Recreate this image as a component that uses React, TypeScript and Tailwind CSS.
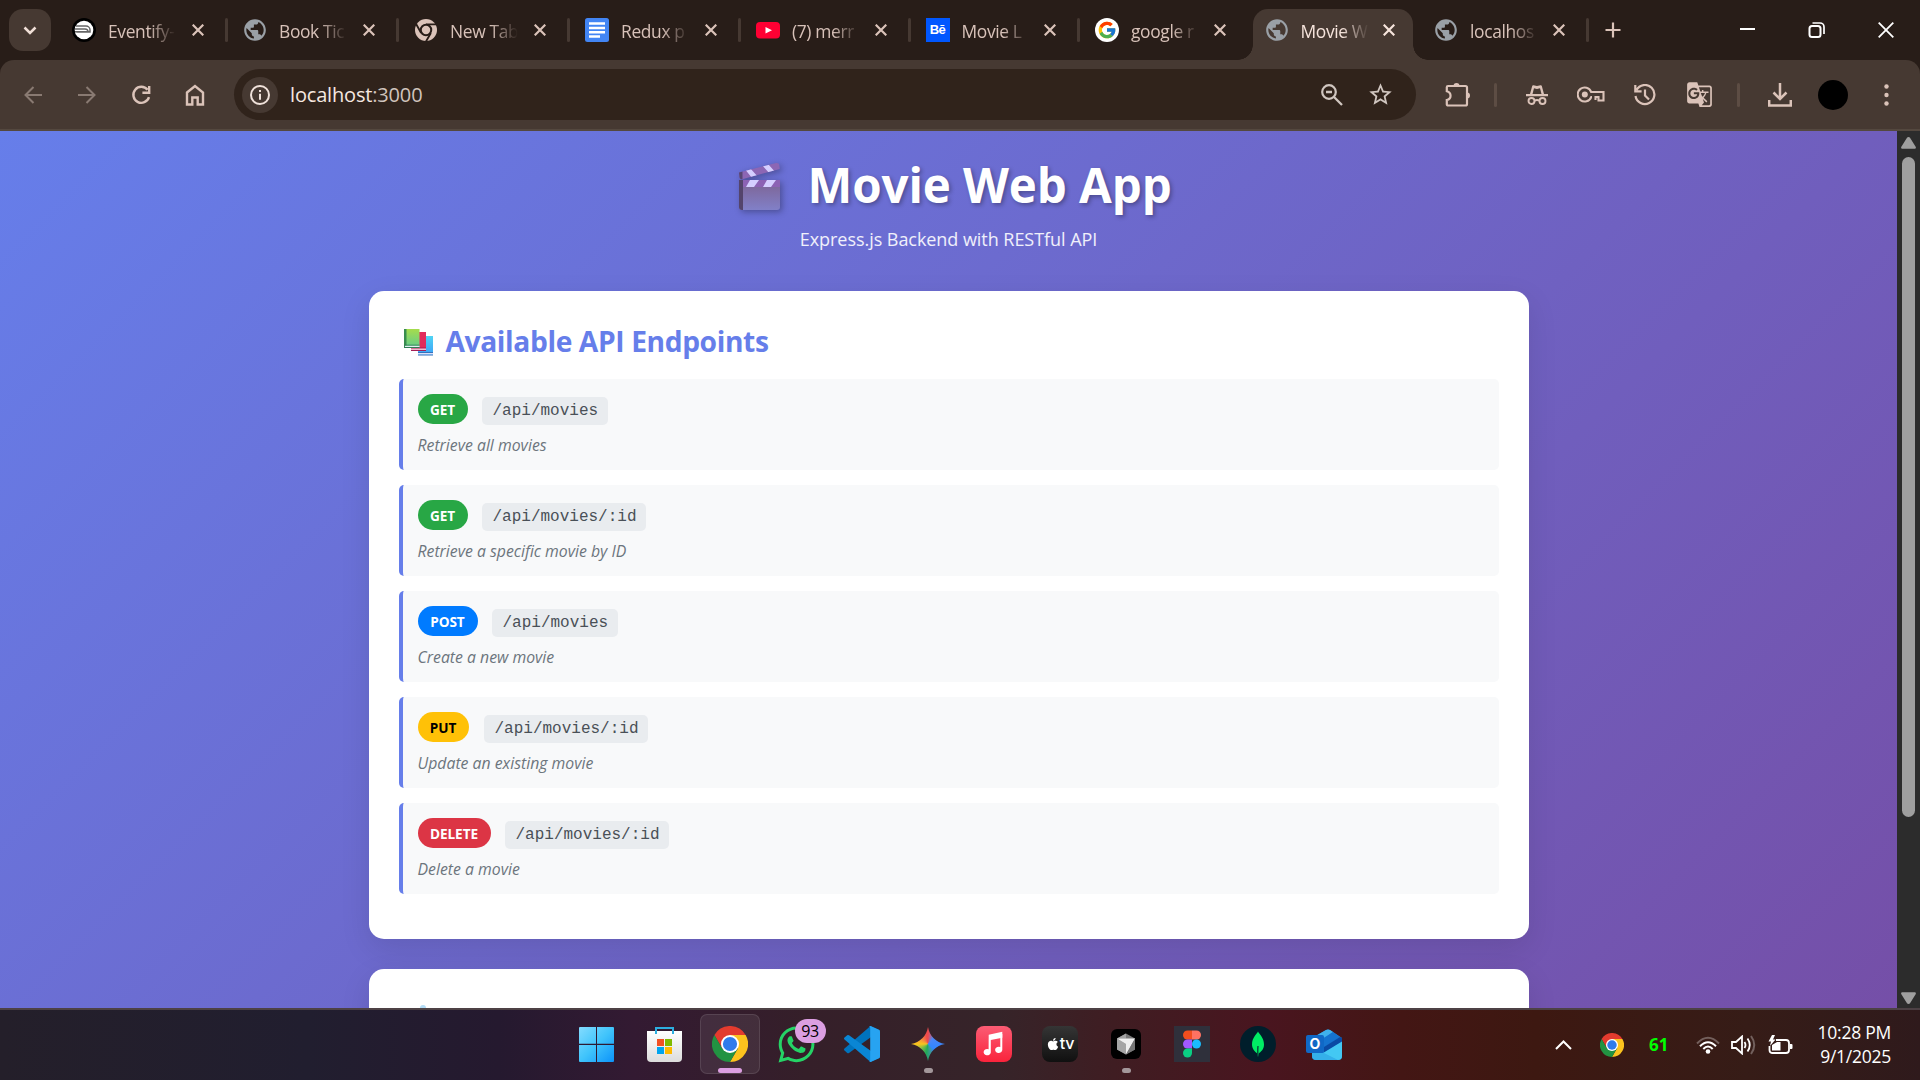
import React from "react";
import { FaApple, FaWhatsapp } from "react-icons/fa";
import { FcGoogle } from "react-icons/fc";
import { MdGTranslate, MdHistory, MdPublic, MdStarBorder } from "react-icons/md";

const stroke = {
  fill: "none",
  stroke: "currentColor",
  strokeWidth: 2,
} as const;

function ChromeLogo({ size }: { size: number }) {
  return (
    <svg width={size} height={size} viewBox="0 0 36 36">
      <path d="M18 9 H33.6 A18 18 0 0 0 2.4 9 L10.2 22.5 Z" fill="#e33b2e" />
      <path d="M25.8 22.5 L18 36 A18 18 0 0 0 33.6 9 H18 Z" fill="#fcc31e" />
      <path d="M10.2 22.5 L2.4 9 A18 18 0 0 0 18 36 L25.8 22.5 Z" fill="#229342" />
      <circle cx="18" cy="18" r="9" fill="#fff" />
      <circle cx="18" cy="18" r="7.1" fill="#2f7bea" />
    </svg>
  );
}

function MonoChrome() {
  return (
    <svg width="22" height="22" viewBox="0 0 24 24" fill="none">
      <circle cx="12" cy="12" r="12" fill="#dbc3b9" />
      <path d="M12 5.800H24M6.700 15.200L1.200 5.500M17.300 15.200L12 24.500" stroke="#281d18" strokeWidth="2" />
      <circle cx="12" cy="12" r="5.700" fill="#dbc3b9" stroke="#281d18" strokeWidth="2.200" />
    </svg>
  );
}

const Globe = () => <MdPublic size={26} color="#9aa0a6" className="-m-px shrink-0" />;

function EventifyIcon() {
  return (
    <svg width="24" height="24" viewBox="0 0 24 24">
      <circle cx="12" cy="12" r="12" fill="#000" />
      <circle cx="12" cy="12" r="9.3" fill="#fff" />
      <path d="M4 8h10a4 4 0 0 1 4 4v2H4.500M3 11h10a3 3 0 0 1 3 3M3 13.700h15" fill="none" stroke="#666" strokeWidth="1.500" />
    </svg>
  );
}

function DocsIcon() {
  return (
    <svg width="24" height="24" viewBox="0 0 24 24">
      <rect width="24" height="24" rx="2.500" fill="#4285f4" />
      <path d="M4 5.500h16M4 10h16M4 14.300h16M4 18.500h11" stroke="#fff" strokeWidth="2.400" />
    </svg>
  );
}

function YouTubeIcon() {
  return (
    <svg width="24" height="24" viewBox="0 0 24 24">
      <rect y="4" width="24" height="16.500" rx="4" fill="#ff0033" />
      <path d="M9.500 9l6.500 3.300-6.500 3.300z" fill="#fff" />
    </svg>
  );
}

const BehanceIcon = () => (
  <span className="flex h-6 w-6 items-center justify-center bg-[#0057ff] font-['Liberation_Sans'] text-[13px] font-bold tracking-[-0.5px] text-white">
    Bē
  </span>
);

const GoogleIcon = () => (
  <span className="flex h-6 w-6 items-center justify-center rounded-full bg-white">
    <FcGoogle size={20} />
  </span>
);

function Cross({ size = 12, width = 2.2 }: { size?: number; width?: number }) {
  return (
    <svg width={size} height={size} viewBox={`0 0 ${size} ${size}`} className="shrink-0">
      <path d={`M.7.7L${size - 0.7} ${size - 0.7}M${size - 0.7} .7L.7 ${size - 0.7}`} {...stroke} strokeWidth={width} />
    </svg>
  );
}

type TabInfo = { title: string; icon: React.ReactNode; active?: boolean; sep?: boolean; wide?: boolean };

const tabs: TabInfo[] = [
  { title: "Eventify-", icon: <EventifyIcon />, sep: true, wide: true },
  { title: "Book Tic", icon: <Globe />, sep: true, wide: true },
  { title: "New Tab", icon: <MonoChrome />, sep: true, wide: true },
  { title: "Redux p", icon: <DocsIcon />, sep: true, wide: true },
  { title: "(7) merr", icon: <YouTubeIcon />, sep: true },
  { title: "Movie L", icon: <BehanceIcon />, sep: true },
  { title: "google r", icon: <GoogleIcon /> },
  { title: "Movie W", icon: <Globe />, active: true },
  { title: "localhos", icon: <Globe />, sep: true },
];

function Tab({ tab }: { tab: TabInfo }) {
  return (
    <div className={`relative flex h-[60px] shrink-0 items-center ${tab.wide ? "w-[171px]" : "w-[169.5px]"}`}>
      {tab.active && (
        <>
          <div className="absolute top-[9px] bottom-0 left-[3.5px] w-[160px] rounded-t-[15px] bg-[#463932]" />
          <div className="absolute bottom-0 left-[-11.500px] h-[15px] w-[15px] bg-[radial-gradient(circle_at_0_0,transparent_14.5px,#463932_15px)]" />
          <div className="absolute bottom-0 left-[163.5px] h-[15px] w-[15px] bg-[radial-gradient(circle_at_100%_0,transparent_14.5px,#463932_15px)]" />
        </>
      )}
      <div className="relative ml-[15px] flex h-6 w-6 shrink-0 items-center justify-center">{tab.icon}</div>
      <div
        className={`relative mt-[2px] ml-3 w-[70px] shrink-0 text-[17.4px] leading-6 tracking-[-0.35px] whitespace-nowrap [mask-image:linear-gradient(90deg,#000_58%,transparent_97%)] ${tab.active ? "text-[#f6e4dc]" : "text-[#d8c2b9]"}`}
      >
        {tab.title}
      </div>
      <div className={`relative flex ${tab.wide ? "ml-[14px]" : "ml-[12.500px]"} ${tab.active ? "text-[#f6e4dc]" : "text-[#dbc3b9]"}`}>
        <Cross />
      </div>
      {tab.sep && <div className="ml-auto h-6 w-[3px] rounded bg-[#463932]" />}
    </div>
  );
}

function TabStrip() {
  return (
    <div className="flex h-[60px] shrink-0 bg-[#281d18]">
      <div className="mt-[9px] ml-[9px] flex h-[42px] w-[42px] shrink-0 items-center justify-center rounded-[14px] bg-[#463932] text-[#f0dfd7]">
        <svg width="14" height="9" viewBox="0 0 14 9">
          <path d="M1.500 1.500L7 7l5.500-5.500" {...stroke} strokeWidth={2.5} />
        </svg>
      </div>
      <div className="ml-[6px] flex">
        {tabs.map((t) => (
          <Tab key={t.title} tab={t} />
        ))}
      </div>
      <div className="flex w-[49px] items-center justify-center text-[#dbc3b9]">
        <svg width="16" height="16" viewBox="0 0 16 16">
          <path d="M8 .5v15M.5 8h15" {...stroke} strokeWidth={2.2} />
        </svg>
      </div>
      <div className="ml-auto flex items-center text-white">
        <div className="flex w-[69px] justify-center">
          <div className="mt-[-2px] h-[2px] w-[15px] bg-white" />
        </div>
        <div className="flex w-[69px] justify-center">
          <svg width="17" height="16" viewBox="0 0 17 16">
            <rect x="1.500" y="4" width="11" height="11" rx="2.500" {...stroke} />
            <path d="M4.500 1h7.500a4 4 0 0 1 4 4v7" {...stroke} strokeWidth={1.7} />
          </svg>
        </div>
        <div className="flex w-[69px] justify-center">
          <Cross size={16} width={1.8} />
        </div>
      </div>
    </div>
  );
}

const Slot = ({ children, dim }: { children: React.ReactNode; dim?: boolean }) => (
  <div className={`flex w-[54px] shrink-0 items-center justify-center ${dim ? "text-[#897a72]" : "text-[#dbc3b9]"}`}>{children}</div>
);

function Toolbar() {
  return (
    <div className="h-[71px] shrink-0 bg-[#281d18]">
      <div className="flex h-full items-center rounded-t-[14px] border-b-2 border-[#54483f] bg-[#463932] pb-0 pl-[6px]">
        <Slot dim>
          <svg width="18" height="18" viewBox="0 0 18 18">
            <path d="M18 9H2M9.500 1L1.500 9l8 8" {...stroke} />
          </svg>
        </Slot>
        <Slot dim>
          <svg width="18" height="18" viewBox="0 0 18 18">
            <path d="M0 9h16M8.500 1l8 8-8 8" {...stroke} />
          </svg>
        </Slot>
        <Slot>
          <svg width="20" height="20" viewBox="0 0 20 20">
            <path d="M16.600 4.800A8 8 0 1 0 18 12.200M18.200 1v6.800h-6.800" {...stroke} strokeWidth={2.4} />
          </svg>
        </Slot>
        <Slot>
          <svg width="20" height="22" viewBox="0 0 20 22">
            <path d="M2 8.500L10 2l8 6.500V20.500h-5.300v-7H7.300v7H2z" {...stroke} strokeWidth={2.4} />
          </svg>
        </Slot>
        <div className="ml-[12px] flex h-[51px] w-[1182px] shrink-0 items-center rounded-full bg-[#30231b] pl-2">
          <div className="flex h-9 w-9 items-center justify-center rounded-full bg-[#463932] text-[#f0e2db]">
            <svg width="20" height="20" viewBox="0 0 20 20">
              <circle cx="10" cy="10" r="9" {...stroke} />
              <path d="M10 8.800v6M10 5v2" {...stroke} />
            </svg>
          </div>
          <div className="ml-[12px] text-[20px] tracking-[-0.17px] text-[#f6e8e0]">
            localhost<span className="text-[#d0c4bd]">:3000</span>
          </div>
          <div className="ml-auto flex items-center text-[#d0c6c0]">
            <svg width="22" height="22" viewBox="0 0 22 22" className="mr-[24px]">
              <circle cx="8" cy="8" r="6.800" {...stroke} strokeWidth={2.2} />
              <path d="M13 13l8 8M5 8h6" {...stroke} strokeWidth={2.3} />
            </svg>
            <MdStarBorder size={27} className="mr-[22.500px]" />
          </div>
        </div>
        <div className="ml-[14px] flex items-center">
          <Slot>
            <svg width="25" height="26" viewBox="0 0 25 26">
              <path d="M3 4.500h17.500a1.500 1.500 0 0 1 1.500 1.500v16.500a1.500 1.500 0 0 1-1.500 1.500H3a1.200 1.200 0 0 1-1.200-1.200V18.500c5-1 5-7.500 0-8.800V5.700A1.200 1.200 0 0 1 3 4.500z" {...stroke} strokeWidth={2.2} transform="translate(0 -.5)" />
              <path d="M8.500 4a3 3 0 0 1 6 0zM22 10.500a3 3 0 0 1 0 6z" fill="currentColor" />
            </svg>
          </Slot>
          <div className="ml-[10px] h-6 w-[3px] rounded bg-[#5d4d44]" />
          <div className="w-[13px]" />
          <Slot>
            <svg width="22" height="20" viewBox="0 0 22 20">
              <path d="M0 9h22v2.200H0zM4 9L6.200 1q.3-1 1.300-.7l3.500.8 3.500-.8q1-.3 1.300.7L18 9h-2.500L14 3.200l-3 .7-3-.7L6.500 9z" fill="currentColor" />
              <circle cx="5.500" cy="16" r="3" {...stroke} strokeWidth={1.9} />
              <circle cx="16.500" cy="16" r="3" {...stroke} strokeWidth={1.9} />
              <path d="M8.500 15.800q2.500-1.800 5 0" {...stroke} />
            </svg>
          </Slot>
          <Slot>
            <svg width="28" height="17" viewBox="0 0 28 17">
              <path d="M14.500 6h12v8.500h-5V11h-3v3M15 11h-.8A7 7 0 1 1 14.200 6h1" {...stroke} strokeWidth={2.1} />
              <circle cx="7.800" cy="8.500" r="3" fill="currentColor" />
            </svg>
          </Slot>
          <Slot>
            <svg width="22" height="22" viewBox="0 0 22 22">
              <path d="M2.500 6A9.500 9.500 0 1 1 1.500 12M1.300 1v6.300h6.300M11 5.500v6l4 4" {...stroke} strokeWidth={2.2} />
            </svg>
          </Slot>
          <Slot>
            <MdGTranslate size={27} />
          </Slot>
          <div className="ml-[11px] h-6 w-[3px] rounded bg-[#5d4d44]" />
          <div className="w-[13px]" />
          <Slot>
            <svg width="24" height="24" viewBox="0 0 24 24">
              <path d="M12 0v15M5.500 9.500L12 16l6.500-6.500M1.200 17v5.600h21.600V17" {...stroke} strokeWidth={2.5} />
            </svg>
          </Slot>
          <div className="-mx-px flex">
            <Slot>
              <div className="h-[30px] w-[30px] rounded-full bg-black" />
            </Slot>
          </div>
          <Slot>
            <svg width="5" height="22" viewBox="0 0 5 22" fill="currentColor">
              <circle cx="2.500" cy="2.500" r="2.200" />
              <circle cx="2.500" cy="11" r="2.200" />
              <circle cx="2.500" cy="19.500" r="2.200" />
            </svg>
          </Slot>
        </div>
      </div>
    </div>
  );
}

function Clapper() {
  return (
    <svg width="44" height="50" viewBox="0 0 44 50" className="drop-shadow-[2px_2px_3px_rgba(0,0,0,0.3)]">
      <defs>
        <linearGradient id="slate" x1="0" y1="0" x2="0" y2="1">
          <stop offset="0" stopColor="#7d6291" />
          <stop offset="1" stopColor="#8180c8" />
        </linearGradient>
        <clipPath id="arm">
          <path d="M1 10.500L38 1q3-.5 3.300 2l.5 4L5 17q-3 .8-3.500-1.500z" />
        </clipPath>
      </defs>
      <g clipPath="url(#arm)">
        <rect width="44" height="20" fill="#8c66b4" />
        <path d="M6 6h6l9 10h-7zM23 2h7l9 10h-7z" fill="#d5ceff" />
        <path d="M0 8h4.500v12H0z" fill="#574774" />
      </g>
      <rect x="1" y="18" width="41" height="30" rx="3" fill="url(#slate)" />
      <path d="M1 18h4v30H4q-3 0-3-3z" fill="#54446c" />
      <path d="M5 18h37v7H5z" fill="#8c62b4" />
      <path d="M12 18h9l-5 7H8zM29 18h9l-5 7h-8z" fill="#d5ceff" />
    </svg>
  );
}

function Books() {
  return (
    <svg width="29" height="27" viewBox="0 0 29 27">
      <defs>
        <linearGradient id="g1" x1="0" y1="0" x2="0" y2="1">
          <stop offset="0" stopColor="#a6dc4c" />
          <stop offset="1" stopColor="#62cc8c" />
        </linearGradient>
        <linearGradient id="g2" x1="0" y1="0" x2="0" y2="1">
          <stop offset="0" stopColor="#50d4f4" />
          <stop offset="1" stopColor="#3ca0f8" />
        </linearGradient>
      </defs>
      <path d="M14 7h15v19H14z" fill="url(#g2)" />
      <path d="M14 23.500h15M14 26h15" stroke="#3671ba" strokeWidth="1" />
      <path d="M14 24.700h15" stroke="#e4e4fa" strokeWidth="1.300" />
      <path d="M7 3h15v18.500H7z" fill="#e22c5c" />
      <path d="M7 19h15M7 21.500h15" stroke="#a51e58" strokeWidth="1" />
      <path d="M7 20.200h15" stroke="#f3e2ee" strokeWidth="1.200" />
      <path d="M0 0h15.500v18.500H0z" fill="url(#g1)" />
      <path d="M0 0h2.500v18.500H0z" fill="#388d4e" />
      <path d="M0 16.200h15.500M0 18.500h15.500" stroke="#2e7c55" strokeWidth="1" />
      <path d="M1 17.400h14.500" stroke="#dff0f0" strokeWidth="1.200" />
    </svg>
  );
}

const endpoints = [
  { method: "GET", path: "/api/movies", text: "Retrieve all movies", badge: "w-[50px] bg-[#28a745] text-white mr-[14px]", chip: "w-[126px]" },
  { method: "GET", path: "/api/movies/:id", text: "Retrieve a specific movie by ID", badge: "w-[50px] bg-[#28a745] text-white mr-[14px]", chip: "w-[164px]" },
  { method: "POST", path: "/api/movies", text: "Create a new movie", badge: "w-[60px] bg-[#007bff] text-white mr-[14px]", chip: "w-[126px]" },
  { method: "PUT", path: "/api/movies/:id", text: "Update an existing movie", badge: "w-[51px] bg-[#ffc107] text-black mr-[15px]", chip: "w-[164px]" },
  { method: "DELETE", path: "/api/movies/:id", text: "Delete a movie", badge: "w-[73px] bg-[#dc3545] text-white mr-[14px]", chip: "w-[164px]" },
];

function PageContent() {
  return (
    <div className="flex min-h-0 flex-1">
      <main className="w-[1897px] overflow-hidden bg-[linear-gradient(135deg,#667eea_0%,#764ba2_100%)] bg-[length:1897px_1105px]">
        <header className="flex flex-col items-center">
          <h1 className="mt-[20px] flex h-[72px] items-center pl-[12px] text-[47.5px] font-bold text-white [text-shadow:2px_2px_4px_rgba(0,0,0,0.3)]">
            <Clapper />
            <span className="mt-[-4px] ml-[26px] w-[364px] tracking-[-0.1px] whitespace-nowrap">Movie Web App</span>
          </h1>
          <p className="mt-[1px] h-[30px] text-[18px] leading-[30px] tracking-[-0.05px] whitespace-nowrap text-white/90">Express.js Backend with RESTful API</p>
        </header>
        <section className="mx-auto mt-[37px] h-[648px] w-[1160px] rounded-[15px] bg-white px-[30px] pt-[30px] shadow-[0_10px_30px_rgba(0,0,0,0.1)]">
          <h2 className="flex h-[43px] items-center pl-[5px] text-[28.2px] font-bold text-[#667eea]">
            <Books />
            <span className="mt-[-2px] ml-[13px] tracking-[-0.38px] whitespace-nowrap">Available API Endpoints</span>
          </h2>
          <div className="mt-[15px] flex flex-col gap-[15px]">
            {endpoints.map((e, i) => (
              <div key={i} className="h-[91px] rounded-[5px] border-l-4 border-[#667eea] bg-[#f8f9fa] px-[15px] pt-[15px]">
                <div className="flex">
                  <span className={`flex h-[30px] items-center justify-center rounded-full pt-[2px] text-[13.6px] font-bold tracking-[-0.1px] ${e.badge}`}>{e.method}</span>
                  <code className={`mt-[3px] h-7 rounded-[5px] bg-[#e9ecef] pl-[11px] font-['Liberation_Mono'] text-[16px] leading-[29px] text-[#495057] ${e.chip}`}>{e.path}</code>
                </div>
                <p className="mt-[8px] text-[15.800px] leading-6 text-[#6c757d] italic">{e.text}</p>
              </div>
            ))}
          </div>
        </section>
        <section className="mx-auto mt-[30px] h-[200px] w-[1160px] rounded-[15px] bg-white pt-[36px] pl-[51px] shadow-[0_10px_30px_rgba(0,0,0,0.1)]">
          <div className="h-5 w-[6px] rounded-full bg-[#b3dcf6]" />
        </section>
      </main>
      <div className="flex w-[23px] flex-col items-center bg-[#2c2c2c] text-[#9f9f9f]">
        <svg width="15" height="12" viewBox="0 0 15 12" className="mt-[6px]" fill="currentColor">
          <path d="M7.500 0q1 0 1.500.8L14.800 10q.4 1.700-1 1.800H1.200Q-.2 11.700.2 10L6 .8Q6.500 0 7.500 0z" />
        </svg>
        <div className="mt-[8px] h-[660px] w-[13px] rounded-full bg-[#9f9f9f]" />
        <svg width="15" height="12" viewBox="0 0 15 12" className="mt-auto mb-[4px]" fill="currentColor">
          <path d="M7.500 12q1 0 1.500-.8L14.800 2q.4-1.700-1-1.800H1.200Q-.2.300.2 2L6 11.200q.5.800 1.500.8z" />
        </svg>
      </div>
    </div>
  );
}

const WindowsLogo = () => (
  <svg width="35" height="35" viewBox="0 0 35 35" className="mr-[3px]">
    <defs>
      <linearGradient id="win" gradientUnits="userSpaceOnUse" x1="0" y1="0" x2="35" y2="35">
        <stop offset="0" stopColor="#84dcff" />
        <stop offset=".5" stopColor="#40c4fb" />
        <stop offset="1" stopColor="#0c93fa" />
      </linearGradient>
    </defs>
    <path d="M1 0h16v16.700H0V1q0-1 1-1zM18 0h16q1 0 1 1v15.700H18zM0 18h17v17H1q-1 0-1-1zM18 18h17v16q0 1-1 1H18z" fill="url(#win)" />
  </svg>
);

const StoreLogo = () => (
  <svg width="35" height="35" viewBox="0 0 35 35">
    <defs>
      <linearGradient id="bag" x1="0" y1="0" x2="0" y2="1">
        <stop offset="0" stopColor="#fff" />
        <stop offset="1" stopColor="#dcdcdc" />
      </linearGradient>
    </defs>
    <path d="M0 4h35v27q0 4-4 4H4q-4 0-4-4z" fill="url(#bag)" />
    <path d="M9 7V1h17v6" fill="none" stroke="#2caedf" strokeWidth="2" />
    <path d="M10 12h7v7h-7z" fill="#f25022" />
    <path d="M18 12h7v7h-7z" fill="#7fba00" />
    <path d="M10 20h7v7h-7z" fill="#00a4ef" />
    <path d="M18 20h7v7h-7z" fill="#ffb900" />
  </svg>
);

const VSCodeLogo = () => (
  <svg width="36" height="36" viewBox="0 0 36 36">
    <path d="M26.500 0L36 4.400 5 27 Q4 27.600 3.200 27L.5 24.600q-1-1 0-2z" fill="#0073bd" />
    <path d="M26.500 36L36 31.600 5 9.300Q4 8.600 3.200 9.300L.5 11.600q-1 1 0 2z" fill="#0a86d4" />
    <path d="M26.500 0L35 3.800q1 .5 1 1.600v25.200q0 1.100-1 1.600L26.500 36l-1.500-.5q1.200 0 1.200-1.500V2q0-1.500-1.200-1.500z" fill="#27a3f1" />
  </svg>
);

const GeminiLogo = () => (
  <div className="h-[34px] w-[34px] bg-[conic-gradient(from_0deg,#f04a4a_0deg,#4b86f6_40deg,#3186ff_130deg,#3b9a93_165deg,#1fa95a_190deg,#7dbb45_235deg,#fbc41c_270deg,#f79a38_300deg,#f04a4a_350deg)] [clip-path:path('M17_0C18.500_9_25_15.500_34_17C25_18.500_18.500_25_17_34C15.500_25_9_18.500_0_17C9_15.500_15.500_9_17_0Z')]" />
);

const MusicLogo = () => (
  <svg width="36" height="36" viewBox="0 0 36 36">
    <defs>
      <linearGradient id="mus" x1="0" y1="0" x2="0" y2="1">
        <stop offset="0" stopColor="#fb5c74" />
        <stop offset="1" stopColor="#fa233b" />
      </linearGradient>
    </defs>
    <rect width="36" height="36" rx="8" fill="url(#mus)" />
    <path d="M12.700 8.700L26.300 5.700v6L14.800 14V26.500a3.600 3.200 0 1 1-2.200-3.300z" fill="#fff" />
    <path d="M24.300 8h2v16a3.600 3.200 0 1 1-2-3z" fill="#fff" />
  </svg>
);

const AppleTvLogo = () => (
  <div className="flex h-9 w-9 items-center justify-center rounded-[8px] bg-[linear-gradient(#353535,#101010)] text-white">
    <FaApple size={14} className="-mt-px" />
    <span className="-mt-[3px] font-['Inter'] text-[16px] leading-4 font-medium tracking-[-0.2px]">tv</span>
  </div>
);

const CursorLogo = () => (
  <svg width="30" height="30" viewBox="0 0 30 30">
    <rect width="30" height="30" rx="6" fill="#000" />
    <path d="M15 4.500l9 5v11l-9 5-9-5v-11z" fill="#777" />
    <path d="M15 4.500v5H6z" fill="#a0a0a0" />
    <path d="M6 9.500l9 5.500v10.500l-9-5z" fill="#a5a5a5" />
    <path d="M6 9.500h18L15 25.500V15z" fill="#efefef" />
    <path d="M24 9.500v11l-9 5z" fill="#777" />
  </svg>
);

const FigmaLogo = () => (
  <svg width="36" height="36" viewBox="0 0 36 36">
    <rect width="36" height="36" fill="#2f303b" />
    <path d="M18 4.500h-4.500a4.500 4.500 0 0 0 0 9H18z" fill="#f24e1e" />
    <path d="M18 4.500h4.500a4.500 4.500 0 0 1 0 9H18z" fill="#ff7262" />
    <path d="M18 13.500h-4.500a4.500 4.500 0 0 0 0 9H18z" fill="#a259ff" />
    <circle cx="22.500" cy="18" r="4.500" fill="#1abcfe" />
    <path d="M13.500 22.500H18V27a4.500 4.500 0 1 1-4.500-4.500z" fill="#0acf83" />
  </svg>
);

const MongoLogo = () => (
  <svg width="36" height="36" viewBox="0 0 36 36">
    <circle cx="18" cy="18" r="18" fill="#001e2b" />
    <path d="M18 5.500c1 2.500 6 6 6 13 0 5-3 7-5.300 9L18 31l-.7-3.500C15 25.500 12 23 12 18.500c0-7 5-10.500 6-13z" fill="#00ed64" />
    <path d="M18 20v10l-.4-3q-.2-4 .4-7z" fill="#06413a" stroke="#06413a" strokeWidth=".8" />
  </svg>
);

const OutlookLogo = () => (
  <div className="relative h-[31px] w-9">
    <svg width="36" height="31" viewBox="0 0 36 31">
      <path d="M20 1q2-1 4 0l12 8v18q0 4-4 4H10q-4 0-4-4V9z" fill="#1b86d8" />
      <path d="M8 8L20 1q2-1 4 0l3 2L12 14z" fill="#3fb1ec" />
      <path d="M27 3l7 5-18 12V10z" fill="#1573cf" />
      <path d="M34 8l2 1v4L18 24v-6z" fill="#0a4aa4" />
      <path d="M36 12.500V27q0 4-4 4H10l7-7z" fill="#43c8f3" />
      <path d="M6 24h12l14 7H10q-4 0-4-4z" fill="#34b0ea" />
      <rect y="6" width="18" height="18" rx="2" fill="#1068c6" />
    </svg>
    <span className="absolute top-[6px] left-0 w-[18px] text-center font-['Inter'] text-[14px] leading-[18px] font-bold text-white">O</span>
  </div>
);

const WhatsAppLogo = () => (
  <div className="relative">
    <FaWhatsapp size={41} color="#25d366" />
    <span className="absolute -top-[5px] left-[19px] h-6 w-[31px] rounded-full bg-[#dc9fe2] text-center text-[16px] leading-6 tracking-[-0.4px] text-black">93</span>
  </div>
);

const apps: { icon: React.ReactNode; tile?: boolean; dot?: boolean }[] = [
  { icon: <WindowsLogo /> },
  { icon: <StoreLogo /> },
  { icon: <ChromeLogo size={36} />, tile: true },
  { icon: <WhatsAppLogo /> },
  { icon: <VSCodeLogo /> },
  { icon: <GeminiLogo />, dot: true },
  { icon: <MusicLogo /> },
  { icon: <AppleTvLogo /> },
  { icon: <CursorLogo />, dot: true },
  { icon: <FigmaLogo /> },
  { icon: <MongoLogo /> },
  { icon: <OutlookLogo /> },
];

function Taskbar() {
  return (
    <div className="flex h-[72px] shrink-0 border-t-2 border-[#4d4145] bg-[linear-gradient(90deg,#241f2a_0%,#211e2f_16%,#25192f_26%,#331a32_33%,#351f29_42%,#362429_52%,#3f1d22_58%,#49151f_66%,#431614_73%,#3d1811_80%,#361c17_91%,#2f1a1c_100%)] pl-[568px] text-white">
      <div className="flex items-start gap-[6px] pt-1">
        {apps.map((a, i) => (
          <div
            key={i}
            className={`relative flex h-[60px] w-[60px] items-center justify-center rounded-[7px] border ${a.tile ? "border-white/10 bg-white/8" : "border-transparent"}`}
          >
            {a.icon}
            {a.tile && <div className="absolute bottom-0 left-[17px] h-[5px] w-6 rounded-full bg-[#dc9fe2]" />}
            {a.dot && <div className="absolute bottom-0 left-[25px] h-[5px] w-[9px] rounded-full bg-[#a3979a]" />}
          </div>
        ))}
      </div>
      <div className="ml-auto flex items-center pr-[29px]">
        <svg width="17" height="10" viewBox="0 0 17 10">
          <path d="M1 9l7.500-7.500L16 9" {...stroke} />
        </svg>
        <div className="ml-[28px]">
          <ChromeLogo size={24} />
        </div>
        <span className="ml-[25px] w-[20px] text-[17px] font-bold text-[#00ff00]">61</span>
        <svg width="24" height="18" viewBox="0 0 24 18" className="ml-[27px]">
          <path d="M1 7.500Q12-4 23 7.500" {...stroke} opacity=".3" />
          <path d="M4 10.200q8-8 16 0M7.300 13q4.700-4.800 9.400 0" {...stroke} />
          <circle cx="12" cy="15.500" r="2.300" fill="currentColor" />
        </svg>
        <svg width="25" height="20" viewBox="0 0 25 20" className="ml-[11px]">
          <path d="M1 7h4l6-5.500v17L5 13H1zM13.500 7q2 3 0 6M16.500 3.500q4.500 6.500 0 13" {...stroke} strokeWidth={1.8} />
          <path d="M20 1q6.500 9 0 18" {...stroke} opacity=".3" />
        </svg>
        <svg width="25" height="20" viewBox="0 0 25 20" className="ml-[12px]">
          <path d="M8 5h10q3 0 3 3v7q0 3-3 3H4q-2.500 0-2.500-3v-4" {...stroke} strokeWidth={1.8} />
          <path d="M4 10l5-3h3.500v8.500H4zM22 9h1.500q1 0 1 1v3q0 1-1 1H22zM4 0L.5 6.500H3L2 11l5.500-6.500H5L7 0z" fill="currentColor" />
        </svg>
        <div className="mt-[-2px] ml-[23px] w-[75px] text-right text-[17.5px] leading-6 tracking-[-0.25px] whitespace-nowrap">
          <div>10:28 PM</div>
          <div>9/1/2025</div>
        </div>
      </div>
    </div>
  );
}

export default function App() {
  return (
    <div className="flex h-[1080px] w-[1920px] flex-col overflow-hidden font-['Open_Sans','Noto_Sans',sans-serif]">
      <TabStrip />
      <Toolbar />
      <PageContent />
      <Taskbar />
    </div>
  );
}
